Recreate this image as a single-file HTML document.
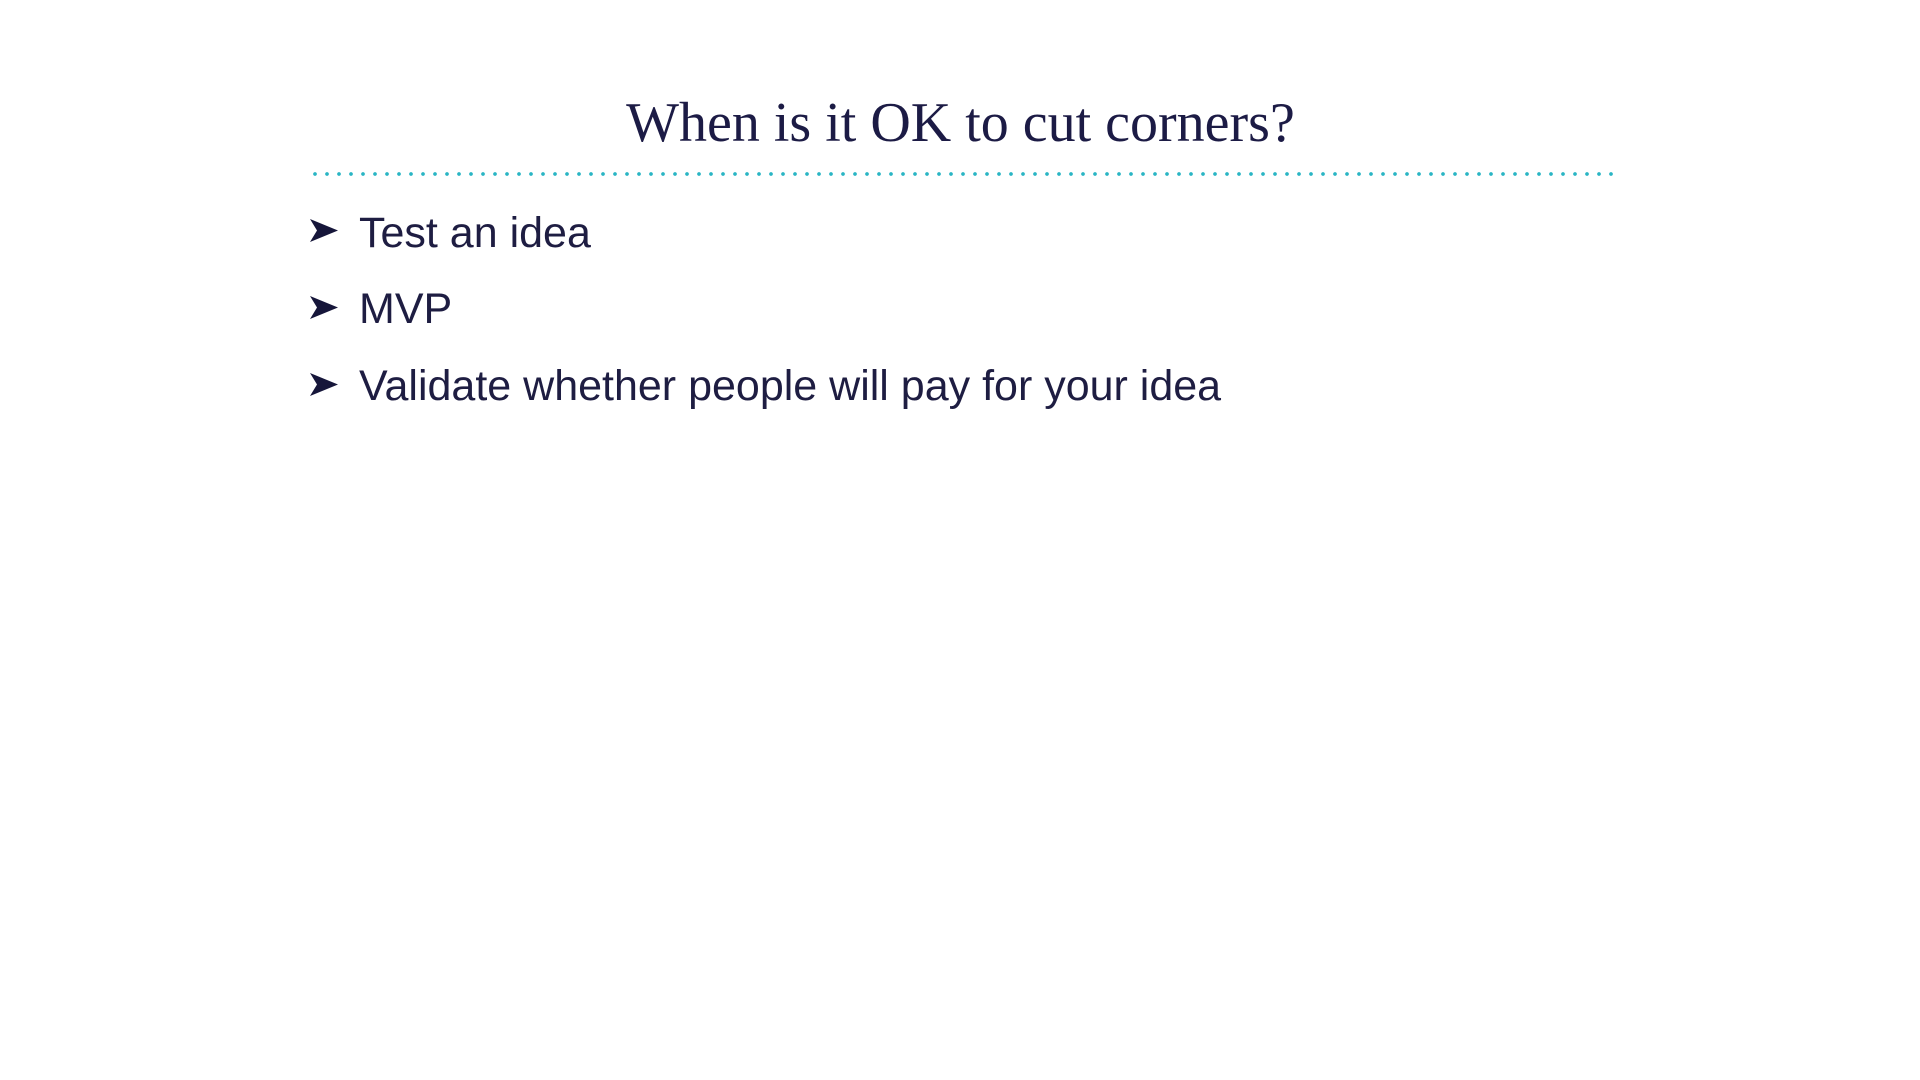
<!DOCTYPE html>
<html><head><meta charset="utf-8"><style>
html,body{margin:0;padding:0;background:#fff;width:1920px;height:1080px;overflow:hidden;position:relative;}
.t{position:absolute;left:0;width:1921px;text-align:center;top:0;font-family:"Liberation Serif",serif;font-size:56px;color:#1c1b45;line-height:1;}
.dots{position:absolute;left:309px;top:172px;width:1306px;height:4px;background-image:radial-gradient(circle,#2ab5c4 1.7px,transparent 2px);background-size:12px 4px;background-repeat:repeat-x;}
.b{position:absolute;left:359px;font-family:"Liberation Sans",sans-serif;font-size:43px;color:#1e1d42;line-height:1;white-space:nowrap;}
.a{position:absolute;left:310px;width:28px;height:23px;}
</style></head><body>
<div class="t" style="top:95px">When is it OK to cut corners?</div>
<div class="dots"></div>
<svg class="a" style="top:219px" viewBox="0 0 28 23"><path d="M0 0 L28 11.5 L0 23 L7 11.5 Z" fill="#16163a"/></svg>
<div class="b" style="top:212px">Test an idea</div>
<svg class="a" style="top:296px" viewBox="0 0 28 23"><path d="M0 0 L28 11.5 L0 23 L7 11.5 Z" fill="#16163a"/></svg>
<div class="b" style="top:288px">MVP</div>
<svg class="a" style="top:373px" viewBox="0 0 28 23"><path d="M0 0 L28 11.5 L0 23 L7 11.5 Z" fill="#16163a"/></svg>
<div class="b" style="top:365px">Validate whether people will pay for your idea</div>
</body></html>
